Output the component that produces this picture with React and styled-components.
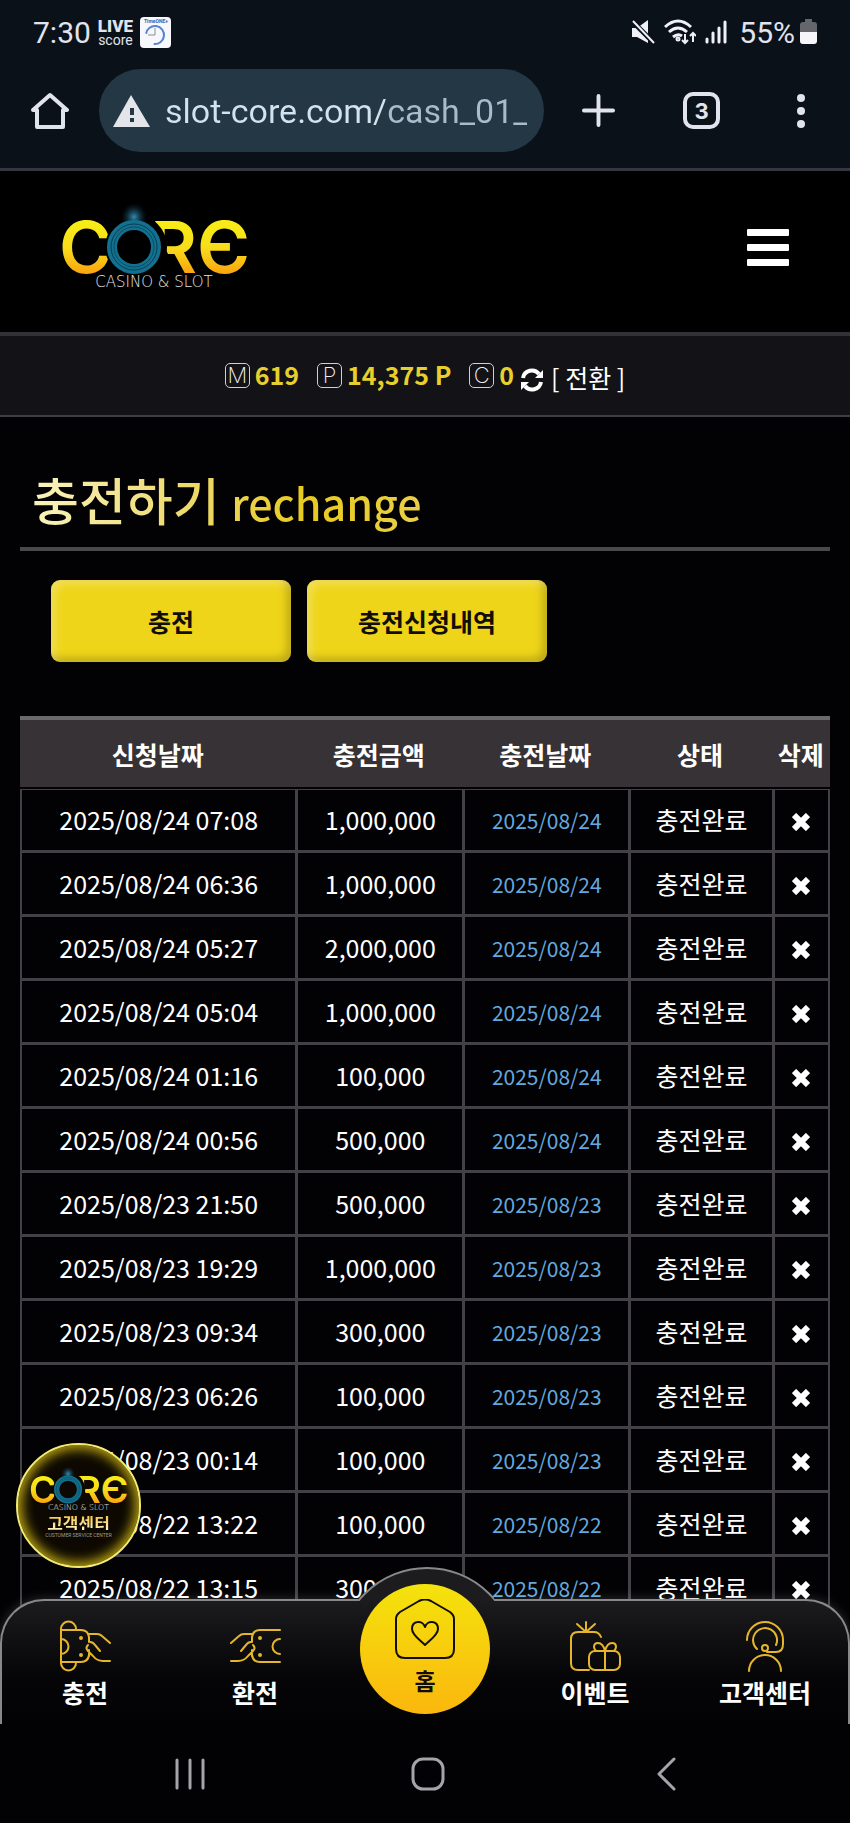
import React from 'react'
import styled, { createGlobalStyle, css, ThemeProvider } from 'styled-components'

const theme = {
    colors: {
        background: '#020104',
        chrome: '#0b1119',
        chromeText: '#e1e4ee',
        pill: '#233745',
        line: '#444146',
        navLine: '#88878a',
        gold: '#e8d02c',
        icon: '#e5b62c',
        link: '#64a9df'
    },
    fonts: {
        site: '"Noto Sans CJK KR", "Noto Sans", sans-serif',
        system: 'Roboto, "Noto Sans CJK KR", sans-serif',
        logo: 'Inter, "Liberation Sans", sans-serif'
    }
}

const rows = [
    ['2025/08/24 07:08', '1,000,000'],
    ['2025/08/24 06:36', '1,000,000'],
    ['2025/08/24 05:27', '2,000,000'],
    ['2025/08/24 05:04', '1,000,000'],
    ['2025/08/24 01:16', '100,000'],
    ['2025/08/24 00:56', '500,000'],
    ['2025/08/23 21:50', '500,000'],
    ['2025/08/23 19:29', '1,000,000'],
    ['2025/08/23 09:34', '300,000'],
    ['2025/08/23 06:26', '100,000'],
    ['2025/08/23 00:14', '100,000'],
    ['2025/08/22 13:22', '100,000'],
    ['2025/08/22 13:15', '300,000']
]

const GlobalStyle = createGlobalStyle`
    * {
        box-sizing: border-box;
    }
    body {
        margin: 0;
        background: #020104;
    }
    button {
        padding: 0;
        border: none;
        background: none;
        color: inherit;
        font: inherit;
        cursor: pointer;
    }
    a {
        color: inherit;
        text-decoration: none;
    }
    svg {
        display: block;
        flex: none;
    }
`

const StyledScreen = styled.div`
    display: flex;
    flex-direction: column;
    height: 100vh;
    overflow: hidden;
    background: ${({ theme }) => theme.colors.background};
    color: #fff;
    font-family: ${({ theme }) => theme.fonts.site};
`

/* phone and browser chrome */

const StyledChrome = styled.div`
    flex: none;
    background: ${({ theme }) => theme.colors.chrome};
    border-bottom: 3px solid #36363f;
    color: ${({ theme }) => theme.colors.chromeText};
    font-family: ${({ theme }) => theme.fonts.system};
`

const StyledStatus = styled.div`
    display: flex;
    align-items: center;
    justify-content: space-between;
    height: 64px;
    padding: 0 33px;
    font-size: 30px;
`

const StyledStatusGroup = styled.div`
    display: flex;
    align-items: center;
    gap: ${({ gap }) => gap}px;
`

const StyledLive = styled.span`
    display: flex;
    flex-direction: column;
    align-items: center;
    font-size: 14px;
    line-height: 12px;
    strong {
        font: 900 17px/16px Roboto, sans-serif;
    }
`

const StyledToolbar = styled.div`
    display: flex;
    align-items: center;
    height: 104px;
    padding: 5px 36px 16px 31px;
`

const StyledAddress = styled.label`
    display: flex;
    align-items: center;
    flex: 1;
    min-width: 0;
    height: 83px;
    margin: 0 38px 0 30px;
    padding: 0 17px 0 14px;
    gap: 15px;
    border-radius: 42px;
    background: ${({ theme }) => theme.colors.pill};
    input {
        flex: 1;
        min-width: 0;
        padding: 0;
        border: none;
        outline: none;
        background: linear-gradient(90deg, #d3e3ed 220px, #a8bcca 220px);
        background-clip: text;
        color: transparent;
        font: 34px/44px Roboto, sans-serif;
    }
`

const StyledTools = styled.div`
    display: flex;
    align-items: center;
    gap: 68px;
`

const StyledTabs = styled.button`
    width: 37px;
    height: 37px;
    border: 4px solid currentColor;
    border-radius: 10px;
    font: 700 22px/28px Inter, sans-serif;
`

/* site */

const StyledPage = styled.div`
    position: relative;
    flex: 1;
    min-height: 0;
    overflow: hidden;
`

const StyledHeader = styled.header`
    display: flex;
    align-items: center;
    justify-content: space-between;
    height: 161px;
    padding: 0 61px 8px 55px;
    background: #000;
`

const StyledWallet = styled.div`
    display: flex;
    align-items: center;
    justify-content: center;
    gap: 6px;
    height: 85px;
    border-top: 4px solid #323136;
    border-bottom: 2px solid #403e42;
    background: #131216;
    font-size: 25px;
    strong {
        padding-bottom: 4px;
        color: ${({ theme }) => theme.colors.gold};
    }
`

const StyledBalance = styled.span`
    display: flex;
    align-items: center;
    gap: 5px;
    margin-right: ${({ last }) => last ? 0 : 12}px;
`

const StyledCoin = styled.span`
    width: 25px;
    height: 25px;
    border: 1px solid #cfcfd4;
    border-radius: 5px;
    color: #f0f0f4;
    font: 200 22px/23px Inter, sans-serif;
    text-align: center;
`

const StyledSwap = styled.button`
    display: flex;
    align-items: center;
    gap: 7px;
    padding-top: 2px;
    svg {
        margin-top: 6px;
    }
`

const StyledMain = styled.main`
    padding: 37px 20px 0;
`

const StyledTitle = styled.div`
    border-bottom: 4px solid #4a484b;
    padding: 0 12px;
    h1 {
        width: fit-content;
        margin: 0;
        background: linear-gradient(90deg, #f8f3bd, #ecd760 45%, #e8cb1e 70%, #e9cf48);
        background-clip: text;
        color: transparent;
        font-size: 51px;
        font-weight: 500;
        line-height: 90px;
    }
    small {
        font-size: 43px;
    }
`

const StyledActions = styled.div`
    display: flex;
    gap: 16px;
    padding: 29px 31px 54px;
`

const StyledAction = styled.button`
    width: 240px;
    height: 82px;
    border-radius: 9px;
    background: #efd519;
    box-shadow: inset 4px 4px 8px rgba(255, 255, 255, .3), inset -4px -4px 8px rgba(0, 0, 0, .22);
    color: #120d05;
    font-size: 25px;
    font-weight: 700;
`

const StyledTable = styled.table`
    width: 100%;
    table-layout: fixed;
    border-collapse: separate;
    border-spacing: 0;
    font-size: 25px;
    line-height: 36px;
    text-align: center;
`

const StyledTh = styled.th`
    width: ${({ width }) => width};
    height: 71px;
    padding: 0;
    border-top: 4px solid #6b696b;
    background: #363236;
    white-space: nowrap;
`

const StyledTd = styled.td`
    height: 64px;
    padding: 0 0 2px;
    border: 0 solid ${({ theme }) => theme.colors.line};
    border-width: 0 0 3px 3px;
    &:first-child {
        border-left-width: 2px;
    }
    &:last-child {
        border-right-width: 2px;
    }
    tr:first-child > & {
        border-top-width: 1px;
    }
    ${({ small }) => small && css`
        padding: 0;
        color: ${({ theme }) => theme.colors.link};
        font-size: 21px;
    `};
    button {
        display: block;
        margin: 6px auto 0;
    }
`

const StyledGap = styled.tr`
    height: 2px;
    td {
        padding: 0;
    }
`

const StyledSupport = styled.a`
    position: absolute;
    bottom: 156px;
    left: 16px;
    display: flex;
    flex-direction: column;
    align-items: center;
    width: 125px;
    height: 125px;
    padding-top: 19px;
    border: 2px solid #f3ec74;
    border-radius: 50%;
    background: #0d0902;
    box-shadow: inset 0 0 12px 4px #b9a211;
    strong {
        background: linear-gradient(#f6c84a, #fff3c4);
        background-clip: text;
        color: transparent;
        font-size: 17px;
        line-height: 14px;
    }
    small {
        color: #a39b86;
        font: 5px/10px Roboto, sans-serif;
    }
`

/* two pixels taller than it shows, so that its outline stays open at the bottom */
const StyledNav = styled.nav`
    position: absolute;
    right: 0;
    bottom: -2px;
    left: 0;
    display: grid;
    grid-template-columns: repeat(5, 1fr);
    height: 127px;
    border-radius: 44px 44px 0 0;
    background: linear-gradient(#1c1b1d, #060507 60%, #020104);
    box-shadow: inset 0 0 0 2px ${({ theme }) => theme.colors.navLine}, 0 0 12px rgba(255, 255, 255, .18);
`

const StyledBump = styled.div`
    position: absolute;
    top: -32px;
    left: 50%;
    width: 138px;
    height: 34px;
    margin-left: -69px;
    overflow: hidden;
    &::before {
        content: '';
        position: absolute;
        top: 0;
        left: -18px;
        width: 174px;
        height: 174px;
        border: 2px solid ${({ theme }) => theme.colors.navLine};
        border-radius: 50%;
        background: #1c1b1d;
    }
`

const StyledNavItem = styled.a`
    display: flex;
    flex-direction: column;
    align-items: center;
    padding-top: 21px;
    color: ${({ theme }) => theme.colors.icon};
    font-size: 25px;
    font-weight: 700;
    line-height: 40px;
    span {
        color: #fff;
    }
`

const StyledHome = styled.a`
    position: relative;
    display: flex;
    flex-direction: column;
    align-items: center;
    justify-self: center;
    width: 130px;
    height: 130px;
    margin-top: -15px;
    padding-top: 15px;
    border-radius: 50%;
    background: linear-gradient(#f4e30c, #fbb70e);
    color: #120d05;
    font-size: 23px;
    font-weight: 700;
    line-height: 42px;
`

const StyledSystemBar = styled.div`
    display: grid;
    flex: none;
    grid-template-columns: 238px 238px 238px;
    justify-content: center;
    justify-items: center;
    align-items: center;
    height: 99px;
    padding-left: 6px;
    background: #020104;
`

const Logo = ({ id, width }) => (
    <svg width={width} height={width / 2} viewBox="0 0 200 100" role="img" aria-label="CORE CASINO & SLOT">
        <defs>
            <linearGradient id={`${id}-gold`} x1="0" y1="22" x2="0" y2="78" gradientUnits="userSpaceOnUse">
                <stop offset="0" stopColor="#f8ee16" />
                <stop offset=".5" stopColor="#f7dc1c" />
                <stop offset="1" stopColor="#fb9f0c" />
            </linearGradient>
            <radialGradient id={`${id}-spark`}>
                <stop offset="0" stopColor="#3fb0d8" stopOpacity=".8" />
                <stop offset="1" stopColor="#123a55" stopOpacity="0" />
            </radialGradient>
            <mask id={`${id}-ring`}>
                <rect width="200" height="100" fill="#fff" />
                <circle cx="79" cy="49" r="33" fill="#000" />
                <path d="M90 50h20l14 28H90z" fill="#000" />
            </mask>
            <mask id={`${id}-edge`}>
                <rect width="200" height="100" fill="#fff" />
                <circle cx="79" cy="49" r="29" fill="#000" />
            </mask>
        </defs>
        <g fill={`url(#${id}-gold)`} fontFamily={theme.fonts.logo} fontSize="72" fontWeight="600">
            <g mask={`url(#${id}-edge)`}><text x="4" y="75">C</text></g>
            <g mask={`url(#${id}-ring)`}><text x="95" y="75">R</text></g>
            <text x="142" y="75">Є</text>
        </g>
        <ellipse cx="79" cy="19" rx="13" ry="14" fill={`url(#${id}-spark)`} />
        <circle cx="79" cy="49" r="22" fill="none" stroke="#12718f" strokeWidth="10" />
        <circle cx="79" cy="49" r="23" fill="none" stroke="#0a3d52" />
        <circle cx="79" cy="49" r="20" fill="none" stroke="#0a4d66" />
        <text x="99" y="89" fill="#e4e4e8" fontFamily="DejaVu Sans" fontWeight="200" fontSize="15" textAnchor="middle">CASINO &amp; SLOT</text>
    </svg>
)

const Line = ({ size = 52, children }) => (
    <svg width={size} height={size} viewBox={`0 0 ${size} ${size}`} fill="none" stroke="currentColor" strokeWidth="2" strokeLinecap="round" strokeLinejoin="round">
        {children}
    </svg>
)

const DepositIcon = () => (
    <Line>
        <path d="M2 9v34M2 9a7 7 0 0 1 15 0v1M2 43a7 7 0 0 0 15 0v-1M2 10h20q7 0 8 7v5M2 42h20q7 0 8-7M2 19a7 7 0 0 1 0 15" />
        <path d="M29 14h9q3 0 5 2l8 7M29 25q-3 3 0 6l5 5q4 5 10 5h7M31 22q3 0 5 3l5 6M30 30v6" />
        <circle cx="22" cy="18" r="1" fill="currentColor" /><circle cx="22" cy="35" r="1" fill="currentColor" />
    </Line>
)

const WithdrawIcon = () => (
    <Line>
        <path d="M51 10H31q-7 0-8 7v5M51 42H31q-7 0-8-7M51 19a7 7 0 0 0 0 15" />
        <path d="M24 14h-9q-3 0-5 2l-8 7M24 25q3 3 0 6l-5 5q-4 5-10 5H2M22 22q-3 0-5 3l-5 6M23 30v6" />
        <circle cx="31" cy="18" r="1" fill="currentColor" /><circle cx="31" cy="35" r="1" fill="currentColor" />
    </Line>
)

const EventIcon = () => (
    <Line>
        <path d="M20 50H9q-7 0-7-7V19q0-7 7-7h16q5 0 7 5M17 12V2M17 12L8 4M17 12l9-8" />
        <rect x="20" y="31" width="31" height="19" rx="6" />
        <path d="M36 31v19M36 31q-2-8-7-8-4 0-4 4 0 2 2 4M36 31q2-8 7-8 4 0 4 4 0 2-2 4" />
    </Line>
)

const SupportIcon = () => (
    <Line>
        <path d="M8 20a18 18 0 0 1 36 0v4q0 8-7 8H28M18 29a12 12 0 1 1 19-4" />
        <circle cx="26" cy="28" r="3" />
        <path d="M10 51a16 16 0 0 1 32 0" />
    </Line>
)

const HomeIcon = () => (
    <Line size={60}>
        <path d="M1 20q0-4 4-7L24 2q6-3 12 0L55 13q4 3 4 7V50q0 9-9 9H10q-9 0-9-9z" />
        <path d="M30 46C25 41 17 36 17 30c0-9 11-9 13-2 2-7 13-7 13 2 0 6-8 11-13 16z" />
    </Line>
)

const Cross = () => (
    <svg width="18" height="18" viewBox="0 0 18 18" fill="none" stroke="#fff" strokeWidth="6">
        <path d="M2 2l14 14M16 2L2 16" />
    </svg>
)

const StatusBar = () => <StyledStatus>
    <StyledStatusGroup gap={7}>
        <span>7:30</span>
        <StyledLive><strong>LIVE</strong>score</StyledLive>
        <svg width="31" height="31" viewBox="0 0 31 31">
            <rect width="31" height="31" rx="4" fill="#f6f8fc" />
            <text x="16" y="6" fill="#3560b4" fontFamily="Roboto" fontWeight="700" fontSize="5" textAnchor="middle">TimeONE+</text>
            <path d="M6 18a9 9 0 1 1 9 9" fill="none" stroke="#5a82d2" strokeWidth="2" transform="rotate(8 15 18)" />
            <path d="M15 11v7H8" fill="none" stroke="#8a9098" />
        </svg>
    </StyledStatusGroup>
    <StyledStatusGroup gap={9}>
        <svg width="24" height="26" viewBox="0 0 24 26">
            <path d="M1 9h5l11-8v23L6 18H1z" fill="#f0f1f6" />
            <path d="M1 2l23 23" stroke="#0b1119" strokeWidth="5" />
            <path d="M2 2l21 22" stroke="#f0f1f6" strokeWidth="2" />
        </svg>
        <svg width="32" height="26" viewBox="0 0 32 26" fill="none" stroke="#f0f1f6" strokeWidth="3">
            <path d="M1 8q13-12 26 0M5 13q9-8 18 0M9 18q5-4 9-1" />
            <circle cx="14" cy="20" r="1" />
            <path d="M21 15v9M18 21l3 3 3-3M29 23v-9M26 17l3-3 3 3" strokeWidth="2" />
        </svg>
        <svg width="25" height="24" viewBox="0 0 25 24" stroke="#f0f1f6" strokeWidth="3" strokeLinecap="round">
            <path d="M2 19v3M8 13v9M14 8v14M20 2v20" />
        </svg>
        <StyledStatusGroup gap={5}>
            <span>55%</span>
            <svg width="17" height="26" viewBox="0 0 17 26">
                <path d="M5 0h7v3h2q3 0 3 3v8H0V6q0-3 3-3h2z" fill="#65666c" />
                <path d="M0 13h17v9q0 3-3 3H3q-3 0-3-3z" fill="#f6f6fa" />
            </svg>
        </StyledStatusGroup>
    </StyledStatusGroup>
</StyledStatus>

const Toolbar = () => <StyledToolbar>
    <button aria-label="Home">
        <svg width="38" height="38" viewBox="0 0 38 38" fill="none" stroke="currentColor" strokeWidth="4" strokeLinejoin="round">
            <path d="M2 18L19 3l17 15h-4v17H6V18z" />
        </svg>
    </button>
    <StyledAddress>
        <svg width="37" height="32" viewBox="0 0 37 32">
            <path d="M18 0L37 32H0z" fill="#e4e5ea" />
            <path d="M17 13h4v7h-4zM17 23h4v4h-4z" fill="#233745" />
        </svg>
        <input aria-label="Address" defaultValue="slot-core.com/cash_01_1" />
    </StyledAddress>
    <StyledTools>
        <button aria-label="New tab">
            <svg width="33" height="33" viewBox="0 0 34 34" stroke="currentColor" strokeWidth="4" strokeLinecap="round">
                <path d="M2 17h30M17 2v30" />
            </svg>
        </button>
        <StyledTabs aria-label="Tabs">3</StyledTabs>
        <button aria-label="Menu">
            <svg width="26" height="34" viewBox="0 0 26 34" fill="currentColor">
                <circle cx="13" cy="4" r="4" /><circle cx="13" cy="17" r="4" /><circle cx="13" cy="30" r="4" />
            </svg>
        </button>
    </StyledTools>
</StyledToolbar>

const Wallet = () => <StyledWallet>
    <StyledBalance><StyledCoin>M</StyledCoin><strong>619</strong></StyledBalance>
    <StyledBalance><StyledCoin>P</StyledCoin><strong>14,375 P</strong></StyledBalance>
    <StyledBalance last><StyledCoin>C</StyledCoin><strong>0</strong></StyledBalance>
    <StyledSwap>
        <svg width="24" height="24" viewBox="0 0 24 24" fill="none" stroke="#fff" strokeWidth="4">
            <path d="M3 10a9 9 0 0 1 16-4M21 14a9 9 0 0 1-16 4" />
            <path d="M23 2v8h-8zM1 22v-8h8z" fill="#fff" stroke="none" />
        </svg>
        [ 전환 ]
    </StyledSwap>
</StyledWallet>

const History = () => <StyledTable>
    <thead>
        <tr>
            <StyledTh width="34%">신청날짜</StyledTh>
            <StyledTh width="20.6%">충전금액</StyledTh>
            <StyledTh width="20.5%">충전날짜</StyledTh>
            <StyledTh width="17.7%">상태</StyledTh>
            <StyledTh>삭제</StyledTh>
        </tr>
        <StyledGap><td colSpan={5} /></StyledGap>
    </thead>
    <tbody>
        {rows.map(([date, amount]) => (
            <tr key={date}>
                <StyledTd>{date}</StyledTd>
                <StyledTd>{amount}</StyledTd>
                <StyledTd small>{date.slice(0, 10)}</StyledTd>
                <StyledTd>충전완료</StyledTd>
                <StyledTd><button aria-label="삭제"><Cross /></button></StyledTd>
            </tr>
        ))}
    </tbody>
</StyledTable>

const BottomNav = () => <StyledNav>
    <StyledBump />
    <StyledNavItem href="#deposit"><DepositIcon /><span>충전</span></StyledNavItem>
    <StyledNavItem href="#withdraw"><WithdrawIcon /><span>환전</span></StyledNavItem>
    <StyledHome href="#home"><HomeIcon />홈</StyledHome>
    <StyledNavItem href="#event"><EventIcon /><span>이벤트</span></StyledNavItem>
    <StyledNavItem href="#support"><SupportIcon /><span>고객센터</span></StyledNavItem>
</StyledNav>

const SystemBar = () => <StyledSystemBar>
    <button aria-label="Recent apps">
        <svg width="32" height="32" viewBox="0 0 32 32" stroke="#a5a4a8" strokeWidth="3" strokeLinecap="round">
            <path d="M3 2v28M16 2v28M29 2v28" />
        </svg>
    </button>
    <button aria-label="Home screen">
        <svg width="34" height="34" viewBox="0 0 34 34" fill="none" stroke="#a5a4a8" strokeWidth="3">
            <rect x="2" y="2" width="30" height="30" rx="10" />
        </svg>
    </button>
    <button aria-label="Back">
        <svg width="20" height="34" viewBox="0 0 20 34" fill="none" stroke="#a5a4a8" strokeWidth="3" strokeLinecap="round" strokeLinejoin="round">
            <path d="M18 2L3 17l15 15" />
        </svg>
    </button>
</StyledSystemBar>

export default () => {
    return <ThemeProvider theme={theme}>
        <GlobalStyle />
        <StyledScreen>
            <StyledChrome>
                <StatusBar />
                <Toolbar />
            </StyledChrome>
            <StyledPage>
                <StyledHeader>
                    <a href="#home"><Logo id="header" width={200} /></a>
                    <button aria-label="메뉴">
                        <svg width="42" height="38" viewBox="0 0 42 38" fill="#fff">
                            <rect width="42" height="7" rx="1" /><rect y="15" width="42" height="7" rx="1" /><rect y="30" width="42" height="7" rx="1" />
                        </svg>
                    </button>
                </StyledHeader>
                <Wallet />
                <StyledMain>
                    <StyledTitle><h1>충전하기 <small>rechange</small></h1></StyledTitle>
                    <StyledActions>
                        <StyledAction>충전</StyledAction>
                        <StyledAction>충전신청내역</StyledAction>
                    </StyledActions>
                    <History />
                </StyledMain>
                <StyledSupport href="#support">
                    <Logo id="badge" width={104} />
                    <strong>고객센터</strong>
                    <small>CUSTOMER SERVICE CENTER</small>
                </StyledSupport>
                <BottomNav />
            </StyledPage>
            <SystemBar />
        </StyledScreen>
    </ThemeProvider>
}
